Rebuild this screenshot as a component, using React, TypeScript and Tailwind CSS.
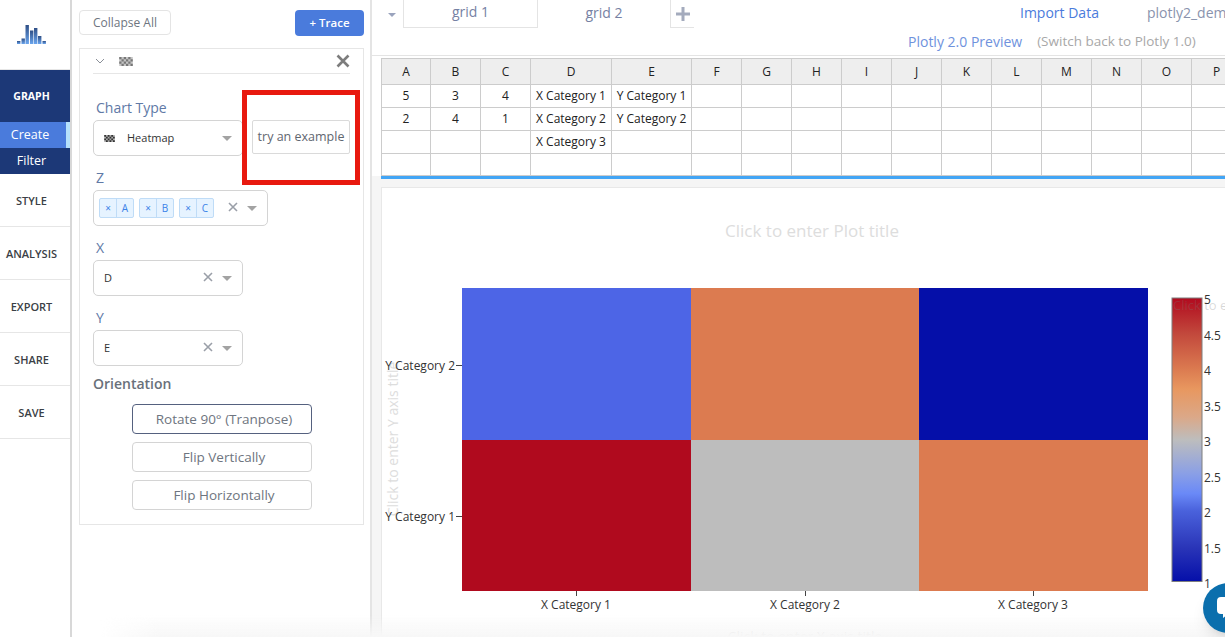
import React from "react";

const font = { fontFamily: '"Open Sans", "Noto Sans", sans-serif' };

function Checker({ dark = false }: { dark?: boolean }) {
  const c = dark ? "#333333" : "#777777";
  const rects: React.ReactNode[] = [];
  for (let r = 0; r < 4; r++)
    for (let k = 0; k < 6; k++)
      if ((r + k) % 2 === 0) rects.push(<rect key={`${r}-${k}`} x={k * 2.4} y={r * 2.4} width={2.4} height={2.4} fill={c} />);
  return (
    <svg width={dark ? 11 : 14} height={dark ? 7 : 9} viewBox="0 0 14.4 9.6" className="shrink-0">
      <rect width="14.4" height="9.6" fill={dark ? "#aaa" : "#c4c4c4"} />
      {rects}
    </svg>
  );
}

function Logo() {
  const bars: [number, number][] = [
    [17, 41],
    [21.5, 38.5],
    [25.5, 25],
    [30, 30.5],
    [34, 28],
    [38, 36],
    [42.5, 41],
  ];
  return (
    <svg width="70" height="50" viewBox="0 0 70 50">
      <defs>
        <linearGradient id="lg" x1="0" y1="0" x2="0" y2="1">
          <stop offset="0" stopColor="#2f4f86" />
          <stop offset="1" stopColor="#6aa5ee" />
        </linearGradient>
      </defs>
      {bars.map(([x, y], i) => (
        <rect key={i} x={x} y={y} width="3.4" height={44 - y} fill="url(#lg)" />
      ))}
    </svg>
  );
}

function Caret() {
  return <span className="w-0 h-0 border-x-[5px] border-x-transparent border-t-[5px] border-t-[#a3a3a3] shrink-0" />;
}

function Clear() {
  return (
    <svg width="10" height="10" viewBox="0 0 10 10" className="shrink-0 mb-0.5">
      <path d="M1 1 L9 9 M9 1 L1 9" stroke="#9a9fa8" strokeWidth="1.6" />
    </svg>
  );
}

function NavItem({ label }: { label: string }) {
  return (
    <div className="h-[53px] flex items-center justify-center border-b border-[#e6e6e6] pt-[3px] pr-[7px] text-[11px] font-semibold text-[#3b3f46]">
      {label}
    </div>
  );
}

function FieldLabel({ children, top }: { children: React.ReactNode; top: string }) {
  return <div className={`text-[14px] leading-5 pl-[3px] text-[#6079a6] ${top}`}>{children}</div>;
}

function ColumnSelect({ value }: { value: string }) {
  return (
    <div className="mt-[2px] h-9 w-[150px] border border-[#d4d4d4] rounded-[5px] bg-white flex items-center pl-[10px] pr-[10px]">
      <span className="text-[11px] text-[#333] flex-1">{value}</span>
      <Clear />
      <span className="w-[9px]" />
      <Caret />
    </div>
  );
}

function Tag({ v }: { v: string }) {
  return (
    <div className="h-5 w-[35px] flex text-[10px] text-[#3b82e8] bg-[#e6f3ff] border border-[#bfdcf7] rounded-[2px]">
      <span className="w-[17px] flex items-center justify-center border-r border-[#bfdcf7]">×</span>
      <span className="flex-1 flex items-center justify-center">{v}</span>
    </div>
  );
}

function ActionButton({ children, active = false }: { children: React.ReactNode; active?: boolean }) {
  return (
    <div
      className={`h-[30px] w-[180px] ml-[39px] rounded-[4px] bg-white border flex items-center justify-center pl-1 text-[13.5px] text-[#6e7580] ${
        active ? "border-[#55617f]" : "border-[#d4d4d4]"
      }`}
    >
      {children}
    </div>
  );
}

const columns = ["A", "B", "C", "D", "E", "F", "G", "H", "I", "J", "K", "L", "M", "N", "O", "P"];
const rows: string[][] = [
  ["5", "3", "4", "X Category 1", "Y Category 1"],
  ["2", "4", "1", "X Category 2", "Y Category 2"],
  ["", "", "", "X Category 3", ""],
  ["", "", "", "", ""],
];

function Sheet() {
  return (
    <div className="grid grid-cols-[49px_50px_50px_81px_80px_50px_50px_50px_50px_50px_50px_50px_50px_50px_50px_50px] grid-rows-[26px_23px_23px_23px_22px] w-max border-t border-l border-[#cccccc] text-[12px] text-[#222]">
      {columns.map((c) => (
        <div key={c} className="bg-[#eeeeee] border-r border-b border-[#cccccc] flex items-center justify-center">
          {c}
        </div>
      ))}
      {rows.flatMap((r, i) =>
        columns.map((c, k) => (
          <div key={`${i}${c}`} className="border-r border-b border-[#cccccc] flex items-center justify-center whitespace-nowrap">
            {r[k] ?? ""}
          </div>
        ))
      )}
    </div>
  );
}

function Chart() {
  const txt = { fontFamily: '"Open Sans", sans-serif', fontSize: 12, fill: "#333" };
  const ghost = { fontFamily: '"Open Sans", sans-serif', fill: "#dddddd" };
  const ticks = ["5", "4.5", "4", "3.5", "3", "2.5", "2", "1.5", "1"];
  return (
    <svg width="843" height="449" viewBox="382 188 843 449" className="block">
      <text x="812" y="237" textAnchor="middle" fontSize="17" style={ghost}>Click to enter Plot title</text>
      <text x="805" y="642" textAnchor="middle" fontSize="14" style={ghost}>Click to enter X axis title</text>
      <text transform="translate(398 439) rotate(-90)" textAnchor="middle" fontSize="14" style={ghost}>Click to enter Y axis title</text>

      <rect x="462" y="288" width="229" height="152" fill="#4d65e6" />
      <rect x="691" y="288" width="228" height="152" fill="#dc7b50" />
      <rect x="919" y="288" width="229" height="152" fill="#050fa9" />
      <rect x="462" y="440" width="229" height="151" fill="#b00a1e" />
      <rect x="691" y="440" width="228" height="151" fill="#bdbdbd" />
      <rect x="919" y="440" width="229" height="151" fill="#dc7b50" />

      <path d="M456 365.5H462M456 516.5H462M576.5 591V596M805.5 591V596M1033.5 591V596" stroke="#444" strokeWidth="1" />
      <text x="455" y="370" textAnchor="end" style={txt}>Y Category 2</text>
      <text x="455" y="521" textAnchor="end" style={txt}>Y Category 1</text>
      <text x="576" y="609" textAnchor="middle" style={txt}>X Category 1</text>
      <text x="805" y="609" textAnchor="middle" style={txt}>X Category 2</text>
      <text x="1033" y="609" textAnchor="middle" style={txt}>X Category 3</text>

      <defs>
        <linearGradient id="cb" x1="0" y1="0" x2="0" y2="1">
          <stop offset="0" stopColor="#b10a1e" />
          <stop offset="0.125" stopColor="#c2483c" />
          <stop offset="0.25" stopColor="#db7a50" />
          <stop offset="0.32" stopColor="#e8975f" />
          <stop offset="0.42" stopColor="#dba888" />
          <stop offset="0.5" stopColor="#bdbdbd" />
          <stop offset="0.62" stopColor="#8a9fe6" />
          <stop offset="0.69" stopColor="#6a89f7" />
          <stop offset="0.75" stopColor="#4a62dc" />
          <stop offset="0.88" stopColor="#2a35b8" />
          <stop offset="1" stopColor="#050fa9" />
        </linearGradient>
      </defs>
      <rect x="1172" y="298" width="30" height="283.5" fill="url(#cb)" stroke="#7f7f7f" strokeWidth="1" />
      <text x="1173" y="310" fontSize="13" fill="#777777" fillOpacity="0.28" fontFamily='"Open Sans", sans-serif'>Click to enter</text>
      {ticks.map((t, i) => (
        <text key={t} x="1204" y={304 + i * 35.5} style={txt}>{t}</text>
      ))}
    </svg>
  );
}

export default function App() {
  return (
    <div className="w-[1225px] h-[637px] overflow-hidden flex bg-white relative" style={font}>
      {/* Icon rail */}
      <nav className="w-[72px] shrink-0 border-r-2 border-[#d8d8d8] bg-white">
        <div className="h-[70px] border-b border-[#e6e6e6]">
          <Logo />
        </div>
        <div className="bg-[#1c3877] text-white">
          <div className="h-[52px] flex items-center justify-center pt-[2px] pr-[7px] text-[10.5px] font-bold">GRAPH</div>
          <div className="h-[26px] bg-[#4a7bdc] border-r-4 border-[#b5e0fb] flex items-center justify-center pr-[6px] text-[12.5px]">Create</div>
          <div className="h-[26px] flex items-center justify-center pr-[7px] text-[12.5px]">Filter</div>
        </div>
        <NavItem label="STYLE" />
        <NavItem label="ANALYSIS" />
        <NavItem label="EXPORT" />
        <NavItem label="SHARE" />
        <NavItem label="SAVE" />
      </nav>

      {/* Trace panel */}
      <aside className="w-[300px] shrink-0 border-r-2 border-[#e4e4e4] bg-white pl-[7px] pr-[6px] pt-[10px]">
        <div className="flex justify-between items-start h-[38px]">
          <div className="h-[25px] w-[92px] border border-[#e4e4e4] rounded-[4px] bg-white flex items-center justify-center text-[12px] text-[#6e7580]">
            Collapse All
          </div>
          <div className="h-[26px] w-[69px] rounded-[4px] bg-[#4a7bdc] flex items-center justify-center text-[11.5px] font-semibold text-white">
            + Trace
          </div>
        </div>
        <section className="w-[285px] h-[477px] border border-[#e6e6e6] bg-white pl-[13px] pr-[13px]">
          <header className="h-[25px] flex items-center border-b border-[#e6e6e6]">
            <svg width="10" height="6" viewBox="0 0 10 6" className="ml-[2px]">
              <path d="M1 1 L5 5 L9 1" fill="none" stroke="#8a8f98" strokeWidth="1" />
            </svg>
            <span className="ml-[14px]">
              <Checker />
            </span>
            <svg width="14" height="14" viewBox="0 0 14 14" className="ml-auto">
              <path d="M1.5 1.5 L12.5 12.5 M12.5 1.5 L1.5 12.5" stroke="#7d7d7d" strokeWidth="2.6" />
            </svg>
          </header>

          <FieldLabel top="mt-[24px]">Chart Type</FieldLabel>
          <div className="flex items-start">
            <div className="mt-[2px] h-9 w-[150px] border border-[#d4d4d4] rounded-[5px] bg-white flex items-center pl-[10px] pr-[10px]">
              <Checker dark />
              <span className="text-[11px] text-[#333] flex-1 ml-[12px]">Heatmap</span>
              <Caret />
            </div>
            <div className="mt-[2px] ml-[9px] h-[34px] w-[98px] border border-[#dadada] rounded-[2px] bg-white flex items-center justify-center text-[12.5px] text-[#5f6670] whitespace-nowrap">
              try an example
            </div>
          </div>

          <FieldLabel top="mt-[12px]">Z</FieldLabel>
          <div className="mt-[2px] h-9 w-[175px] border border-[#d4d4d4] rounded-[5px] bg-white flex items-center pl-[5px] pr-[10px] gap-[5px]">
            <Tag v="A" />
            <Tag v="B" />
            <Tag v="C" />
            <span className="ml-[9px] flex items-center gap-[9px]">
              <Clear />
              <Caret />
            </span>
          </div>

          <FieldLabel top="mt-[12px]">X</FieldLabel>
          <ColumnSelect value="D" />
          <FieldLabel top="mt-[12px]">Y</FieldLabel>
          <ColumnSelect value="E" />

          <div className="mt-[8px] text-[14px] leading-5 font-semibold text-[#69707a]">Orientation</div>
          <div className="mt-[10px] flex flex-col gap-2">
            <ActionButton active>Rotate 90° (Tranpose)</ActionButton>
            <ActionButton>Flip Vertically</ActionButton>
            <ActionButton>Flip Horizontally</ActionButton>
          </div>
        </section>
      </aside>

      {/* Workspace */}
      <main className="flex-1 min-w-0 bg-[#f5f5f5] flex flex-col">
        <div className="h-[56px] bg-white border-b border-[#e4e4e4] pl-[9px] shrink-0 flex">
          <div className="flex h-[28px] items-start">
            <div className="w-[22px] h-[27px] flex items-center justify-center pt-[3px]">
              <span className="w-0 h-0 border-x-[4px] border-x-transparent border-t-[4px] border-t-[#9aa3bd]" />
            </div>
            <div className="w-[134px] h-[28px] pb-1 border-l border-b border-[#e4e4e4] flex items-center justify-center text-[14px] text-[#7681a3]">grid 1</div>
            <div className="w-[134px] h-[28px] pb-1 border-l border-r border-[#e4e4e4] flex items-center justify-center text-[14px] text-[#7681a3]">grid 2</div>
            <div className="w-[23px] h-[28px] border-b border-[#e4e4e4] flex items-center justify-center">
              <svg width="14" height="14" viewBox="0 0 14 14"><path d="M7 0V14M0 7H14" stroke="#a4abbd" strokeWidth="3" /></svg>
            </div>
          </div>
          <div className="flex-1 min-w-0 overflow-hidden">
            <div className="flex flex-col whitespace-nowrap pt-[2px] pl-[214px] text-[14px]">
              <div className="flex h-[20px] items-center">
                <span className="ml-[112px] text-[#4a7bdc]">Import Data</span>
                <span className="ml-[48px] text-[#8a93ad]">plotly2_demo</span>
              </div>
              <div className="flex h-[20px] mt-[9px] items-center">
                <span className="text-[#6f92dd] font-medium">Plotly 2.0 Preview</span>
                <span className="ml-[15px] text-[13.5px] text-[#a8a8a8]">(Switch back to Plotly 1.0)</span>
              </div>
            </div>
          </div>
        </div>

        <div className="h-[2px] bg-white shrink-0" />
        <div className="pl-[9px] bg-white shrink-0 overflow-hidden">
          <Sheet />
        </div>
        <div className="h-[3px] ml-[9px] bg-[#42a5f5] shrink-0" />
        <div className="h-[8px] ml-[9px] shrink-0" />
        <div className="ml-[9px] flex-1 bg-white border-t border-l border-[#e8e8e8] overflow-hidden">
          <Chart />
        </div>
      </main>

      {/* Overlays */}
      <div className="absolute left-[242px] top-[90px] w-[118px] h-[95px] border-[5px] border-[#e8190f] pointer-events-none" />
      <div className="absolute left-[100px] right-0 bottom-0 h-[22px] bg-gradient-to-b from-transparent to-[#f7f7f7] [mask-image:linear-gradient(to_right,transparent,black_60px)] pointer-events-none" />
      <div className="absolute left-[1203px] top-[583px] w-[50px] h-[50px] rounded-full bg-[#0b6fad] shadow-lg flex items-center pl-[14px]">
        <svg width="20" height="22" viewBox="0 0 20 22"><path d="M4 0H20V17H11L6 21V17H4Q0 17 0 13V4Q0 0 4 0Z" fill="#fff" /></svg>
      </div>
    </div>
  );
}
